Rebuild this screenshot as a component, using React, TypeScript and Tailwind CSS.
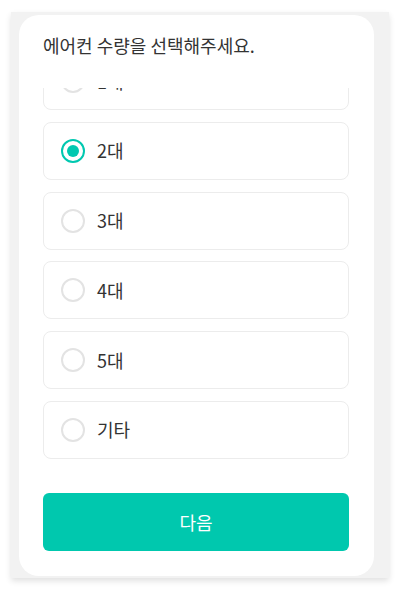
import React, { useState } from 'react';

const options = ['1대', '2대', '3대', '4대', '5대', '기타'];

const Radio: React.FC<{ checked: boolean }> = ({ checked }) => (
  <span
    className={`flex h-[24px] w-[24px] shrink-0 items-center justify-center rounded-full border-2 ${
      checked ? 'border-[#00c8b0]' : 'border-[#e3e3e3]'
    }`}
  >
    {checked && <span className="h-[12px] w-[12px] rounded-full bg-[#00c8b0]" />}
  </span>
);

export default function App() {
  const [selected, setSelected] = useState('2대');

  return (
    <div
      className="h-[589px] w-[400px] bg-white pl-[11px] pt-[12px]"
      style={{ fontFamily: '"Noto Sans CJK KR", "Noto Sans", sans-serif' }}
    >
      <div className="h-[566px] w-[378px] bg-[#f2f2f2] pl-[8px] pt-[3px] shadow-[0_3px_6px_rgba(0,0,0,0.12)]">
        <div className="flex h-[561px] w-[355px] flex-col rounded-[20px] bg-white pl-[24px] pr-[25px]">
          <h1 className="pt-[18px] text-[18px] leading-[25px] font-normal text-[#333]">
            에어컨 수량을 선택해주세요.
          </h1>

          <div className="mt-[30px] h-[373px] overflow-hidden">
            <div className="-mt-[36px] flex flex-col gap-[11.75px]">
              {options.map(opt => (
                <button
                  key={opt}
                  type="button"
                  onClick={() => setSelected(opt)}
                  className="flex h-[58px] items-center gap-[12px] rounded-[8px] border border-[#ececec] bg-white pl-[17px] text-left"
                >
                  <Radio checked={selected === opt} />
                  <span className="text-[18px] text-[#333]">{opt}</span>
                </button>
              ))}
            </div>
          </div>

          <button
            type="button"
            className="mt-[32px] h-[58px] w-full rounded-[6px] bg-[#00c8ae] text-[18px] text-white"
          >
            다음
          </button>
        </div>
      </div>
    </div>
  );
}
